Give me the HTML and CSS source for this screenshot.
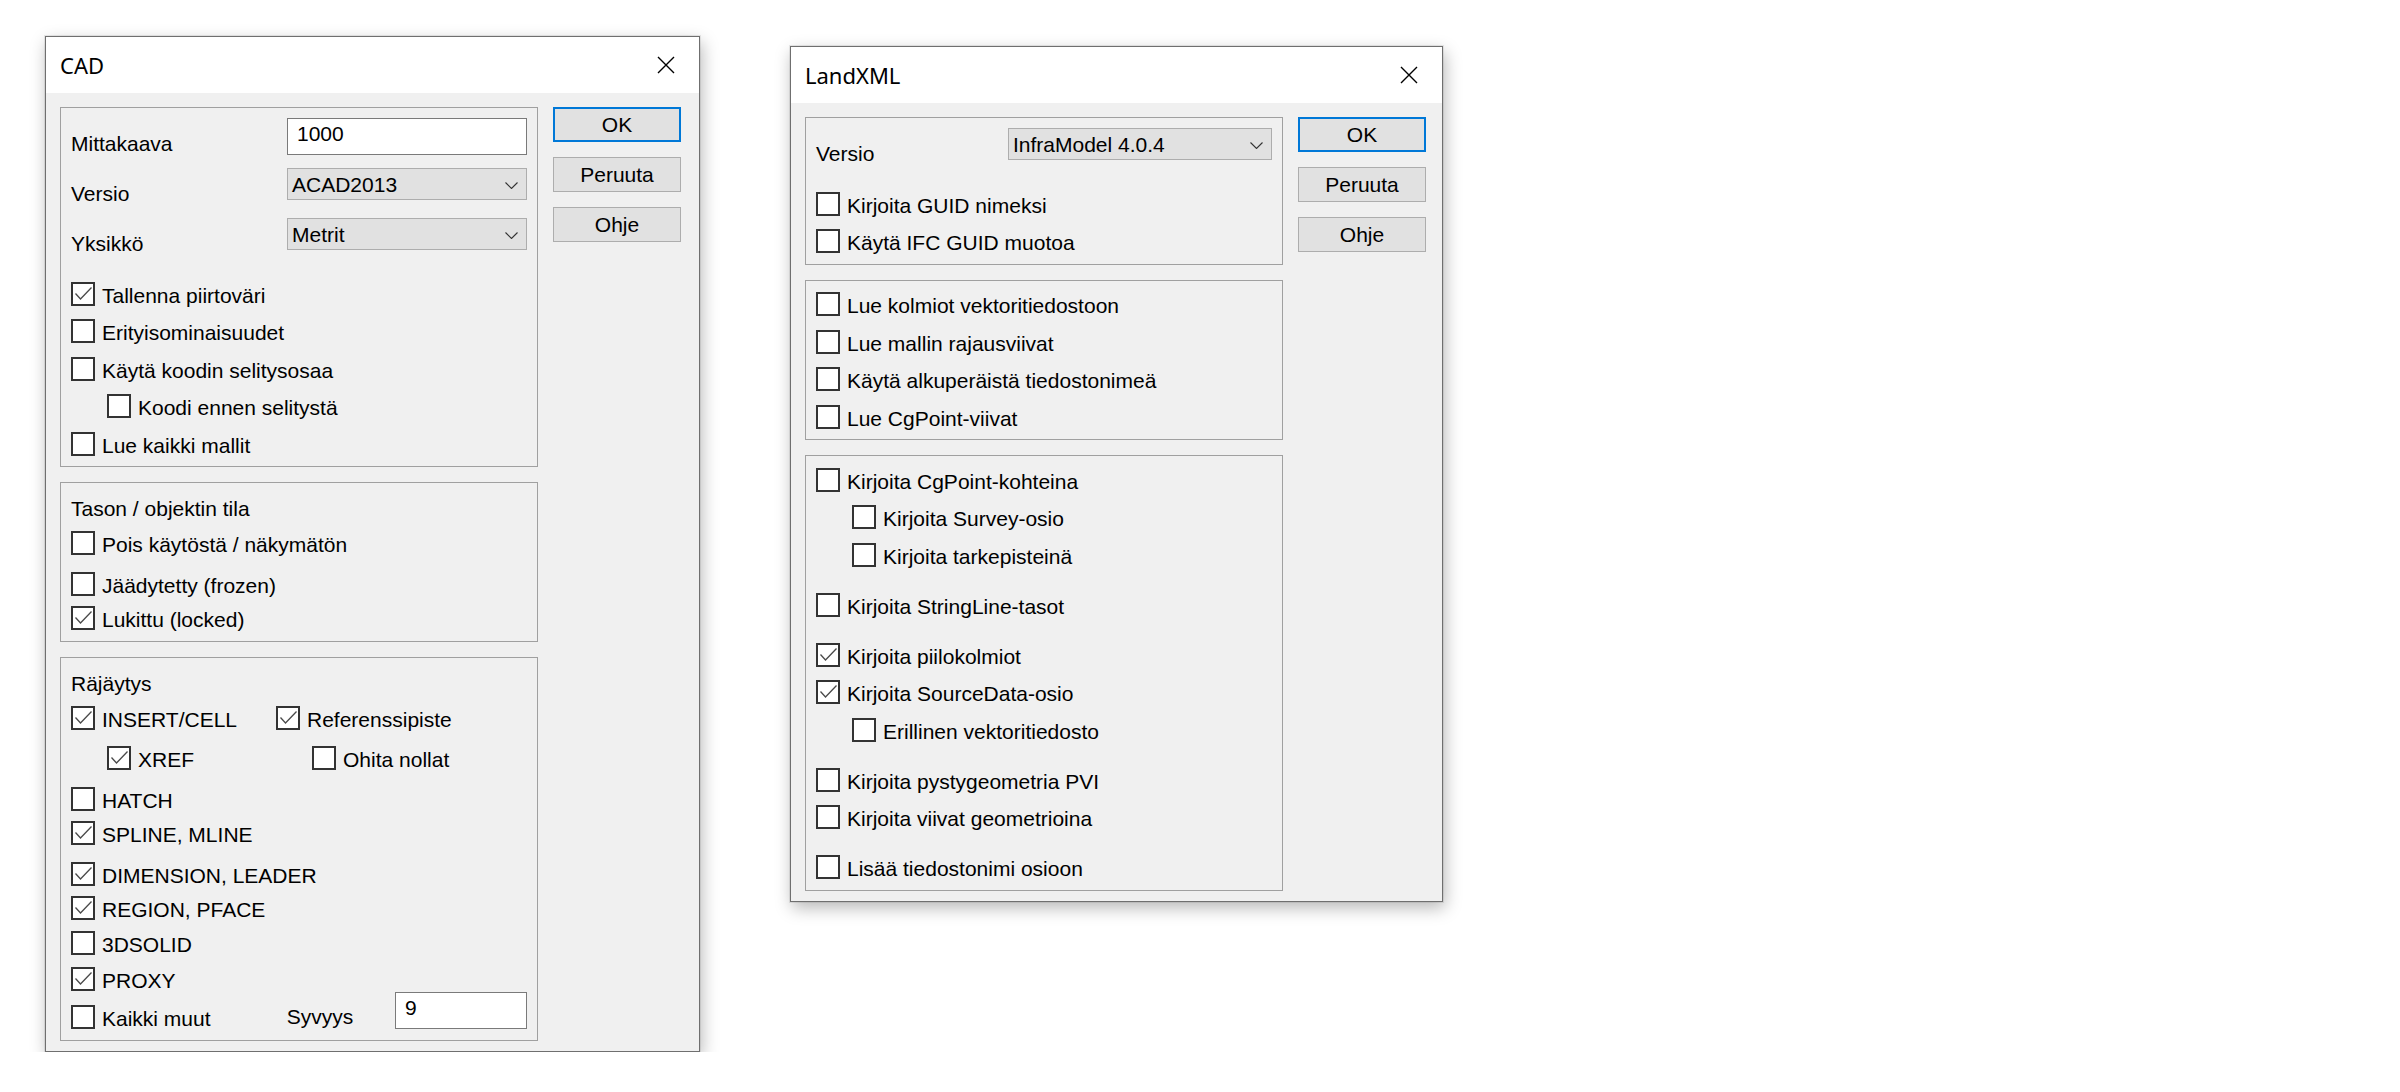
FILE: index.html
```html
<!DOCTYPE html>
<html lang="fi">
  <head>
    <meta charset="UTF-8" />
    <meta name="viewport" content="width=device-width, initial-scale=1.0" />
    <link rel="stylesheet" href="styles.css">
    <title>CAD / LandXML</title>
  </head>
  <body>
    <div class="desktop">
      <!-- CAD -->
      <section class="dialog">
        <header class="titlebar">
          <span class="caption">CAD</span>
          <svg class="close" viewBox="0 0 18 18"><path d="M1 1L17 17M17 1L1 17" /></svg>
        </header>
        <div class="body">
          <div class="groups">
            <div class="group">
              <div class="field">
                <span class="label">Mittakaava</span>
                <div class="edit">1000</div>
              </div>
              <div class="field">
                <span class="label">Versio</span>
                <div class="combo">ACAD2013<svg class="arrow" viewBox="0 0 13 7"><path d="M0.5 0.5L6.5 6.5L12.5 0.5" /></svg></div>
              </div>
              <div class="field">
                <span class="label">Yksikkö</span>
                <div class="combo">Metrit<svg class="arrow" viewBox="0 0 13 7"><path d="M0.5 0.5L6.5 6.5L12.5 0.5" /></svg></div>
              </div>
              <div class="row check"><span class="box"><svg viewBox="0 0 20 20"><path d="M2.5 9.5L7.5 15L18.5 3.5" /></svg></span>Tallenna piirtoväri</div>
              <div class="row check"><span class="box"></span>Erityisominaisuudet</div>
              <div class="row check"><span class="box"></span>Käytä koodin selitysosaa</div>
              <div class="row indent"><div class="check"><span class="box"></span>Koodi ennen selitystä</div></div>
              <div class="row check"><span class="box"></span>Lue kaikki mallit</div>
            </div>

            <div class="group">
              <div class="legend">Tason / objektin tila</div>
              <div class="row check"><span class="box"></span>Pois käytöstä / näkymätön</div>
              <div class="row check gap-m"><span class="box"></span>Jäädytetty (frozen)</div>
              <div class="row check gap-s"><span class="box"><svg viewBox="0 0 20 20"><path d="M2.5 9.5L7.5 15L18.5 3.5" /></svg></span>Lukittu (locked)</div>
            </div>

            <div class="group">
              <div class="legend">Räjäytys</div>
              <div class="row pair">
                <div class="check"><span class="box"><svg viewBox="0 0 20 20"><path d="M2.5 9.5L7.5 15L18.5 3.5" /></svg></span>INSERT/CELL</div>
                <div class="check"><span class="box"><svg viewBox="0 0 20 20"><path d="M2.5 9.5L7.5 15L18.5 3.5" /></svg></span>Referenssipiste</div>
              </div>
              <div class="row pair indent gap-m">
                <div class="check"><span class="box"><svg viewBox="0 0 20 20"><path d="M2.5 9.5L7.5 15L18.5 3.5" /></svg></span>XREF</div>
                <div class="check"><span class="box"></span>Ohita nollat</div>
              </div>
              <div class="row check gap-m"><span class="box"></span>HATCH</div>
              <div class="row check gap-s"><span class="box"><svg viewBox="0 0 20 20"><path d="M2.5 9.5L7.5 15L18.5 3.5" /></svg></span>SPLINE, MLINE</div>
              <div class="row check gap-m"><span class="box"><svg viewBox="0 0 20 20"><path d="M2.5 9.5L7.5 15L18.5 3.5" /></svg></span>DIMENSION, LEADER</div>
              <div class="row check gap-s"><span class="box"><svg viewBox="0 0 20 20"><path d="M2.5 9.5L7.5 15L18.5 3.5" /></svg></span>REGION, PFACE</div>
              <div class="row check gap-s"><span class="box"></span>3DSOLID</div>
              <div class="row check gap-n"><span class="box"><svg viewBox="0 0 20 20"><path d="M2.5 9.5L7.5 15L18.5 3.5" /></svg></span>PROXY</div>
              <div class="row depth">
                <div class="check"><span class="box"></span>Kaikki muut</div>
                <span class="depth-label">Syvyys</span>
                <div class="edit">9</div>
              </div>
            </div>
          </div>

          <div class="buttons">
            <div class="btn default">OK</div>
            <div class="btn">Peruuta</div>
            <div class="btn">Ohje</div>
          </div>
        </div>
      </section>

      <!-- LandXML -->
      <section class="dialog second">
        <header class="titlebar">
          <span class="caption">LandXML</span>
          <svg class="close" viewBox="0 0 18 18"><path d="M1 1L17 17M17 1L1 17" /></svg>
        </header>
        <div class="body">
          <div class="groups">
            <div class="group">
              <div class="field short">
                <span class="label">Versio</span>
                <div class="combo">InfraModel 4.0.4<svg class="arrow" viewBox="0 0 13 7"><path d="M0.5 0.5L6.5 6.5L12.5 0.5" /></svg></div>
              </div>
              <div class="row check"><span class="box"></span>Kirjoita GUID nimeksi</div>
              <div class="row check"><span class="box"></span>Käytä IFC GUID muotoa</div>
            </div>

            <div class="group checks">
              <div class="row check"><span class="box"></span>Lue kolmiot vektoritiedostoon</div>
              <div class="row check"><span class="box"></span>Lue mallin rajausviivat</div>
              <div class="row check"><span class="box"></span>Käytä alkuperäistä tiedostonimeä</div>
              <div class="row check"><span class="box"></span>Lue CgPoint-viivat</div>
            </div>

            <div class="group checks">
              <div class="row check"><span class="box"></span>Kirjoita CgPoint-kohteina</div>
              <div class="row indent"><div class="check"><span class="box"></span>Kirjoita Survey-osio</div></div>
              <div class="row indent"><div class="check"><span class="box"></span>Kirjoita tarkepisteinä</div></div>
              <div class="row check gap-l"><span class="box"></span>Kirjoita StringLine-tasot</div>
              <div class="row check gap-l"><span class="box"><svg viewBox="0 0 20 20"><path d="M2.5 9.5L7.5 15L18.5 3.5" /></svg></span>Kirjoita piilokolmiot</div>
              <div class="row check"><span class="box"><svg viewBox="0 0 20 20"><path d="M2.5 9.5L7.5 15L18.5 3.5" /></svg></span>Kirjoita SourceData-osio</div>
              <div class="row indent"><div class="check"><span class="box"></span>Erillinen vektoritiedosto</div></div>
              <div class="row check gap-l"><span class="box"></span>Kirjoita pystygeometria PVI</div>
              <div class="row check"><span class="box"></span>Kirjoita viivat geometrioina</div>
              <div class="row check gap-l"><span class="box"></span>Lisää tiedostonimi osioon</div>
            </div>
          </div>

          <div class="buttons">
            <div class="btn default">OK</div>
            <div class="btn">Peruuta</div>
            <div class="btn">Ohje</div>
          </div>
        </div>
      </section>
    </div>
  </body>
</html>
```

FILE: styles.css
```css
* {
  box-sizing: border-box;
  margin: 0;
  padding: 0;
  --face: #f0f0f0;
  --control: #e1e1e1;
  --control-border: #adadad;
  --frame: #a0a0a0;
  --accent: #0078d7;
}

body {
  background-color: white;
  color: black;
  font-family: 'Liberation Sans', Arial, sans-serif;
  font-size: 21px;
  line-height: 24px;
}

.desktop {
  display: flex;
  align-items: flex-start;
  padding: 36px 0 0 45px;
}

.dialog {
  width: 655px;
  border: 1px solid #6f6f6f;
  background-color: var(--face);
  box-shadow: 0 0 0 1px rgba(0, 0, 0, 0.08), 2px 6px 16px rgba(0, 0, 0, 0.28);
}

.dialog.second {
  width: 653px;
  margin: 10px 0 0 90px;
}

.titlebar {
  display: flex;
  align-items: center;
  justify-content: space-between;
  height: 56px;
  padding: 0 24px 0 14px;
  background-color: white;
}

.caption {
  font-family: 'Noto Sans', 'Open Sans', sans-serif;
  font-size: 22px;
  line-height: 30px;
}

.close {
  width: 18px;
  height: 18px;
  fill: none;
  stroke: black;
  stroke-width: 1.4;
}

.body {
  display: flex;
  gap: 15px;
  padding: 14px 18px 10px 14px;
}

.second .body {
  padding-right: 16px;
}

.groups {
  display: flex;
  flex-direction: column;
  gap: 15px;
  width: 478px;
}

.group {
  border: 1px solid var(--frame);
  padding: 10px 10px 10.5px;
}

.group.checks {
  padding-top: 11.5px;
}

.legend {
  margin: 4px 0 10px;
}

/* label + edit / combo */
.field {
  display: flex;
  height: 50px;
}

.label {
  flex: none;
  width: 216px;
  padding-top: 14px;
}

.field.short .label {
  width: 192px;
}

.edit {
  flex: 1;
  height: 37.4px;
  padding: 3px 9px;
  border: 1px solid #7a7a7a;
  background-color: white;
}

.combo {
  display: flex;
  justify-content: space-between;
  flex: 1;
  height: 32.4px;
  padding: 3.5px 4px;
  border: 1px solid var(--control-border);
  background-color: var(--control);
}

.arrow {
  width: 13px;
  height: 7px;
  margin: 9px 4px 0 0;
  fill: none;
  stroke: #333;
  stroke-width: 1.1;
}

/* checkbox rows */
.row {
  margin-top: 13.5px;
}

.legend + .row,
.group > .row:first-child {
  margin-top: 0;
}

.gap-n {
  margin-top: 12.5px;
}

.gap-s {
  margin-top: 10.5px;
}

.gap-m {
  margin-top: 16.5px;
}

.gap-l {
  margin-top: 26px;
}

.check {
  display: flex;
  align-items: flex-start;
  gap: 7px;
  height: 24px;
  line-height: 27px;
  white-space: nowrap;
}

.box {
  flex: none;
  width: 24px;
  height: 24px;
  border: 2px solid #333;
  background-color: white;
}

.box svg {
  display: block;
  width: 20px;
  height: 20px;
  fill: none;
  stroke: #4a4a4a;
  stroke-width: 1.3;
}

.indent {
  padding-left: 36px;
}

.pair {
  display: flex;
}

.pair .check:first-child {
  width: 205px;
}

.depth {
  display: flex;
  align-items: flex-end;
  height: 37.4px;
  margin-top: 1px;
}

.depth .check {
  width: 216px;
}

.depth-label {
  width: 108.5px;
}

.depth .edit {
  flex: none;
  width: 132px;
}

/* buttons */
.buttons {
  display: flex;
  flex-direction: column;
  gap: 15px;
  width: 128px;
}

.btn {
  height: 35px;
  border: 1px solid var(--control-border);
  background-color: var(--control);
  line-height: 33px;
  text-align: center;
}

.btn.default {
  border: 2px solid var(--accent);
  line-height: 31px;
}
```
